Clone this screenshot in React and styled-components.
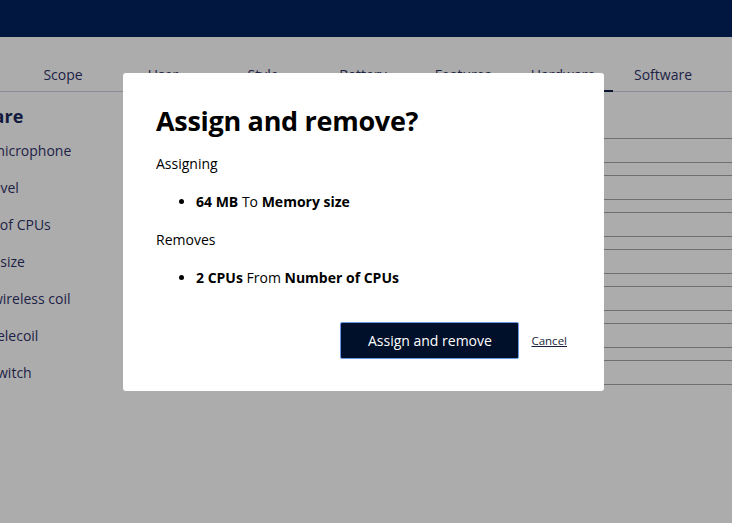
import React from 'react'
import styled, { createGlobalStyle } from 'styled-components'

const FONT = `"Segoe UI", "Open Sans", "Noto Sans", sans-serif`

const GlobalStyle = createGlobalStyle`
  html, body {
    margin: 0;
    padding: 0;
    overflow: hidden;
    background: #acacac;
    font-family: ${FONT};
  }
`

const Page = styled.div`
  width: 732px;
  height: 523px;
  overflow: hidden;
  background: #acacac;
`
const Header = styled.header`
  height: 37px;
  background: #011740;
`
const TabBar = styled.nav`
  display: flex;
  padding: 19px 0 0 13px;
  border-bottom: 1px solid #8b8b94;
`
const Tab = styled.div`
  flex: 0 0 100px;
  height: 36px;
  display: flex;
  align-items: center;
  justify-content: center;
  font-size: 14px;
  color: #1c2246;
  box-shadow: ${p => p.active ? 'inset 0 -2px 0 #0b1430' : 'none'};
  margin-bottom: -1px;
`
const Content = styled.section`
  margin-left: -58px;
  width: 900px;
`
const Heading = styled.h2`
  margin: 0 0 0 -8px;
  height: 40px;
  line-height: 48px;
  font-size: 18px;
  font-weight: 700;
  color: #111a3d;
`
const Row = styled.div`
  display: grid;
  grid-template-columns: 300px 1fr;
  align-items: center;
  height: 37px;
`
const Label = styled.span`
  font-size: 14px;
  color: #1c2246;
  white-space: nowrap;
  margin-left: ${p => p.shift || 0}px;
`
const Field = styled.div`
  height: 23px;
  border-top: 1px solid #707070;
  border-bottom: 1px solid #707070;
`

const Overlay = styled.div`
  position: fixed;
  inset: 0;
  padding: 73px 0 0 123px;
`
const Dialog = styled.div`
  width: 481px;
  height: 318px;
  box-sizing: border-box;
  padding: 0 33px;
  background: #fff;
  border-radius: 3px;
  color: #000;
  display: flex;
  flex-direction: column;
`
const Title = styled.h1`
  margin: 28px 0 0;
  font-size: 27px;
  letter-spacing: -0.3px;
  line-height: 40px;
  font-weight: 700;
`
const Text = styled.p`
  margin: 13px 0 0;
  font-size: 14px;
  line-height: 20px;
`
const List = styled.ul`
  margin: 18px 0 0;
  padding-left: 40px;
  font-size: 14px;
  line-height: 20px;
  & + p { margin-top: 18px; }
`
const Actions = styled.div`
  margin-top: 34px;
  display: flex;
  align-items: center;
  justify-content: flex-end;
  gap: 12px;
  padding-right: 4px;
`
const Primary = styled.button`
  width: 179px;
  height: 37px;
  background: #000f2a;
  color: #fff;
  border: 1px solid #6a97e6;
  border-radius: 2px;
  font-family: ${FONT};
  font-size: 14px;
`
const LinkButton = styled.a`
  font-size: 11.5px;
  color: #1b1f3b;
  text-decoration: underline;
`

const labels = [
  ['Built-in microphone', 0],
  ['Battery level', -4],
  ['Number of CPUs', 0],
  ['Memory size', 0],
  ['Built-in wireless coil', 0],
  ['Built-in telecoil', 0],
  ['Volume switch', -5],
]
const tabs = ['Scope', 'User', 'Style', 'Battery', 'Features', 'Hardware', 'Software']

export default function App() {
  return (
    <>
      <GlobalStyle />
      <Page>
        <Header />
        <TabBar>
          {tabs.map(t => <Tab key={t} active={t === 'Hardware'}>{t}</Tab>)}
        </TabBar>
        <Content>
          <Heading>Hardware</Heading>
          {labels.map(([l, s]) => (
            <Row key={l}>
              <Label shift={s}>{l}</Label>
              <Field />
            </Row>
          ))}
        </Content>
      </Page>
      <Overlay>
        <Dialog>
          <Title>Assign and remove?</Title>
          <Text>Assigning</Text>
          <List>
            <li><b>64 MB</b> To <b>Memory size</b></li>
          </List>
          <Text>Removes</Text>
          <List>
            <li><b>2 CPUs</b> From <b>Number of CPUs</b></li>
          </List>
          <Actions>
            <Primary>Assign and remove</Primary>
            <LinkButton href="#">Cancel</LinkButton>
          </Actions>
        </Dialog>
      </Overlay>
    </>
  )
}
